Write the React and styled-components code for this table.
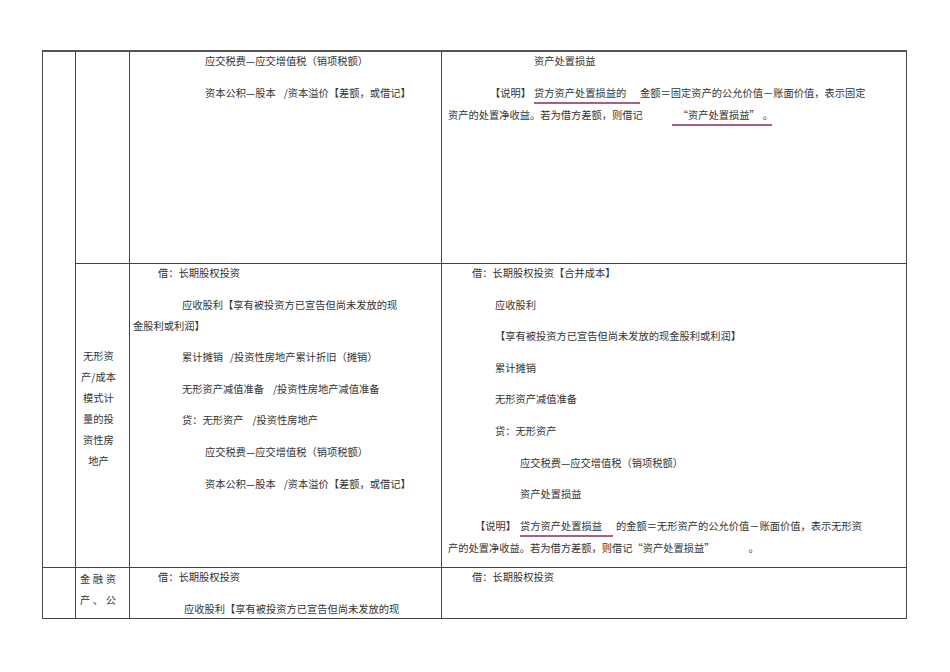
import React from 'react'
import styled, { createGlobalStyle } from 'styled-components'

const Global = createGlobalStyle`
  html, body {
    margin: 0;
    background: #fff;
  }
  body {
    font-family: "Noto Sans CJK SC", "Noto Sans", sans-serif;
    color: #333;
  }
`

const Page = styled.div`
  padding: 50px 0 0 42px;
`

const Sheet = styled.div`
  display: grid;
  grid-template-columns: 33px 54px 312px 465px;
  grid-template-rows: 212px 304px 51px;
  width: max-content;
  border-top: 2px solid #555;
  border-left: 1px solid #444;
`

const Cell = styled.div`
  grid-row: span ${({ $rows }) => $rows || 1};
  border-right: 1px solid #444;
  border-bottom: 1px solid #444;
  overflow: hidden;
  font-size: 10.25px;
  line-height: 21px;
  white-space: nowrap;
`

const LabelCell = styled(Cell)`
  display: flex;
  flex-direction: column;
  justify-content: ${({ $center }) => ($center ? 'center' : 'flex-start')};
  padding: 0 12px ${({ $center }) => ($center ? '16px' : '0')} 4px;
  text-align: center;
`

const Spread = styled.div`
  display: flex;
  justify-content: space-between;
  width: 36px;
`

const Para = styled.div`
  margin-top: 10.6px;
  padding-left: ${({ $pad }) => $pad || 0}px;
  text-indent: ${({ $indent }) => $indent || 0}px;

  &:first-child {
    margin-top: -2px;
  }
`

const Gap = styled.span`
  display: inline-block;
  width: ${({ $w }) => $w}px;
  text-indent: 0;
`

const Under = styled.span`
  display: inline-block;
  width: ${({ $w }) => $w}px;
  padding-left: ${({ $pad }) => $pad || 0}px;
  box-sizing: border-box;
  line-height: 18px;
  text-indent: 0;
  border-bottom: 2px solid #a8607e;
`

const Q = styled.span`
  font-feature-settings: "fwid";
`

const App = () => (
  <Page>
    <Global />
    <Sheet>
      <Cell $rows={2} />

      <LabelCell />
      <Cell>
        <Para $indent={75}>应交税费—应交增值税（销项税额）</Para>
        <Para $indent={75}>
          资本公积—股本<Gap $w={8} />/资本溢价【差额，或借记】
        </Para>
      </Cell>
      <Cell>
        <Para $indent={92}>资产处置损益</Para>
        <Para $pad={6} $indent={42}>
          【说明】<Gap $w={3} />
          <Under $w={106}>贷方资产处置损益的</Under>
          金额＝固定资产的公允价值－账面价值，表示固定
          <br />
          资产的处置净收益。若为借方差额，则借记<Gap $w={29} />
          <Under $w={100} $pad={6}>
            <Q>“</Q>资产处置损益<Q>”</Q><Gap $w={3} />。
          </Under>
        </Para>
      </Cell>

      <LabelCell $center>
        <div>无形资</div>
        <div>产/成本</div>
        <div>模式计</div>
        <div>量的投</div>
        <div>资性房</div>
        <div>地产</div>
      </LabelCell>
      <Cell>
        <Para $indent={28}>借：长期股权投资</Para>
        <Para $pad={3} $indent={49}>
          应收股利【享有被投资方已宣告但尚未发放的现
          <br />
          金股利或利润】
        </Para>
        <Para $indent={52}>
          累计摊销<Gap $w={7} />/投资性房地产累计折旧（摊销）
        </Para>
        <Para $indent={52}>
          无形资产减值准备<Gap $w={9} />/投资性房地产减值准备
        </Para>
        <Para $indent={52}>
          贷：无形资产<Gap $w={9} />/投资性房地产
        </Para>
        <Para $indent={75}>应交税费—应交增值税（销项税额）</Para>
        <Para $indent={75}>
          资本公积—股本<Gap $w={8} />/资本溢价【差额，或借记】
        </Para>
      </Cell>
      <Cell>
        <Para $indent={30}>借：长期股权投资【合并成本】</Para>
        <Para $indent={53}>应收股利</Para>
        <Para $indent={53}>【享有被投资方已宣告但尚未发放的现金股利或利润】</Para>
        <Para $indent={53}>累计摊销</Para>
        <Para $indent={53}>无形资产减值准备</Para>
        <Para $indent={53}>贷：无形资产</Para>
        <Para $indent={78}>应交税费—应交增值税（销项税额）</Para>
        <Para $indent={78}>资产处置损益</Para>
        <Para $pad={6} $indent={27}>
          【说明】<Gap $w={4} />
          <Under $w={93}>贷方资产处置损益</Under>
          <Gap $w={3} />
          的金额＝无形资产的公允价值－账面价值，表示无形资
          <br />
          产的处置净收益。若为借方差额，则借记<Q>“</Q>资产处置损益<Q>”</Q>
          <Gap $w={34} />。
        </Para>
      </Cell>

      <Cell />
      <LabelCell>
        <Spread>
          <span>金</span>
          <span>融</span>
          <span>资</span>
        </Spread>
        <Spread>
          <span>产</span>
          <span>、</span>
          <span>公</span>
        </Spread>
      </LabelCell>
      <Cell>
        <Para $indent={28}>借：长期股权投资</Para>
        <Para $indent={54}>应收股利【享有被投资方已宣告但尚未发放的现</Para>
      </Cell>
      <Cell>
        <Para $indent={30}>借：长期股权投资</Para>
      </Cell>
    </Sheet>
  </Page>
)

export default App
